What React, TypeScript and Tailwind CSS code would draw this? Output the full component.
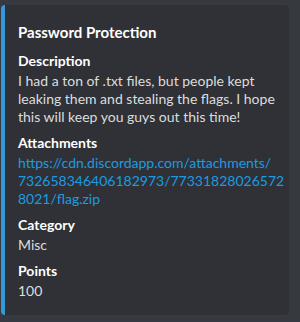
export default function App() {
  return (
    <div className="w-[300px] h-[322px] bg-[#36393f] pt-[5px] pl-[1px] font-['Lato',sans-serif]">
      <div className="w-[288px] h-[310px] flex rounded-[4px] overflow-hidden bg-[#2f3136]">
        <div className="w-[4px] bg-[#3498db] shrink-0" />
        <div className="flex flex-col pl-[13px] pr-[12px] pt-[16px]">
          <h1 className="text-[15px] leading-[22px] font-bold text-white">Password Protection</h1>
          <div className="mt-[9px] flex flex-col gap-[8px]">
            <Field title="Description">
              I had a ton of .txt files, but people kept leaking them and stealing the flags. I hope this will keep you guys out this time!
            </Field>
            <Field title="Attachments">
              <span className="text-[#1e9be0]">
                https://cdn.discordapp.com/attachments/<wbr />732658346406182973/77331828026572<wbr />8021/flag.zip
              </span>
            </Field>
            <Field title="Category">Misc</Field>
            <Field title="Points">100</Field>
          </div>
        </div>
      </div>
    </div>
  )
}

function Field({ title, children }: { title: string; children: React.ReactNode }) {
  return (
    <div className="flex flex-col gap-[2px]">
      <div className="text-[14px] leading-[18px] font-bold text-white">{title}</div>
      <div className="text-[14px] leading-[18px] text-[#dcddde]">{children}</div>
    </div>
  )
}
